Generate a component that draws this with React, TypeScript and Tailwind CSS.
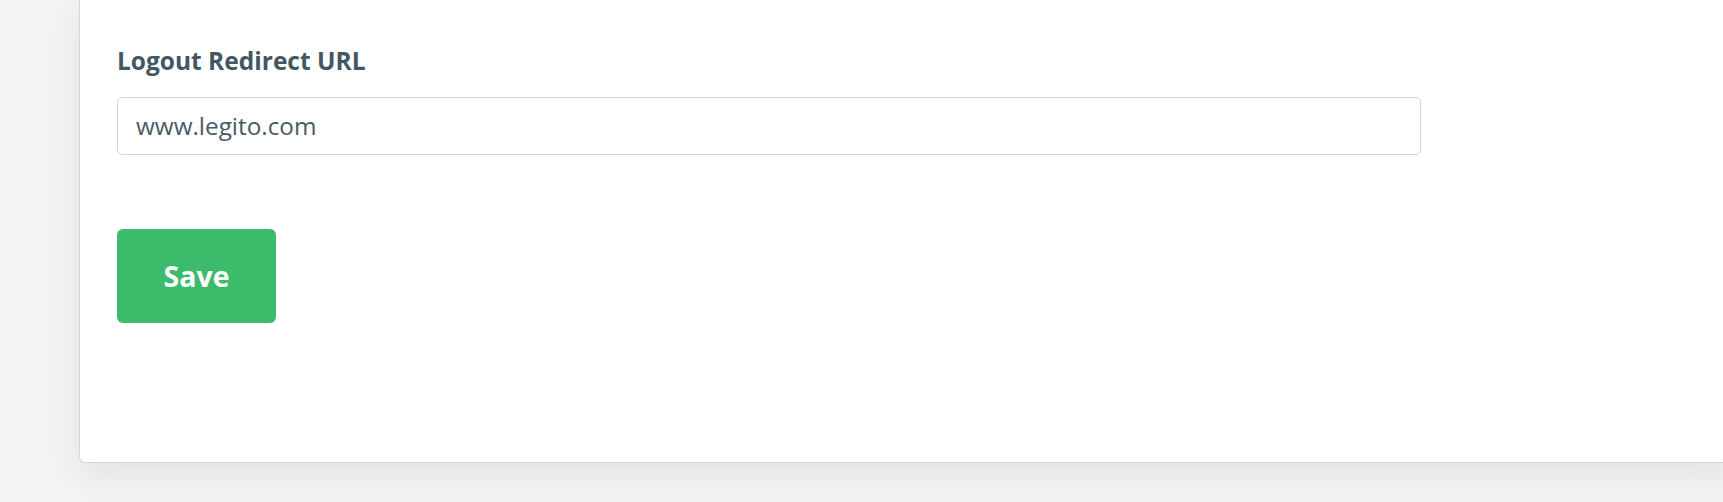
export default function App() {
  return (
    <div
      className="min-h-[502px] w-full overflow-hidden bg-[#f2f4f3] pl-[79px]"
      style={{ fontFamily: '"Open Sans", "Noto Sans", sans-serif' }}
    >
      <div className="mr-[-12px] h-[463px] rounded-bl-[6px] border-b border-l border-[#d3d6d5] bg-white pl-[37px] pt-[45px] shadow-[0_12px_34px_rgba(0,0,0,0.07)]">
        <label className="block text-[24.5px] leading-[32px] font-bold text-[#435763]">
          Logout Redirect URL
        </label>
        <div className="mt-[20px] flex h-[58px] w-[1304px] items-center rounded-[5px] border border-[#d6d6d6] bg-white pl-[18px]">
          <span className="text-[24.3px] leading-[32px] text-[#4a5a64]">www.legito.com</span>
        </div>
        <button className="mt-[74px] flex h-[94px] w-[159px] items-center justify-center rounded-[6px] bg-[#3cbb6b] text-[28.5px] font-bold text-white">
          Save
        </button>
      </div>
    </div>
  );
}
